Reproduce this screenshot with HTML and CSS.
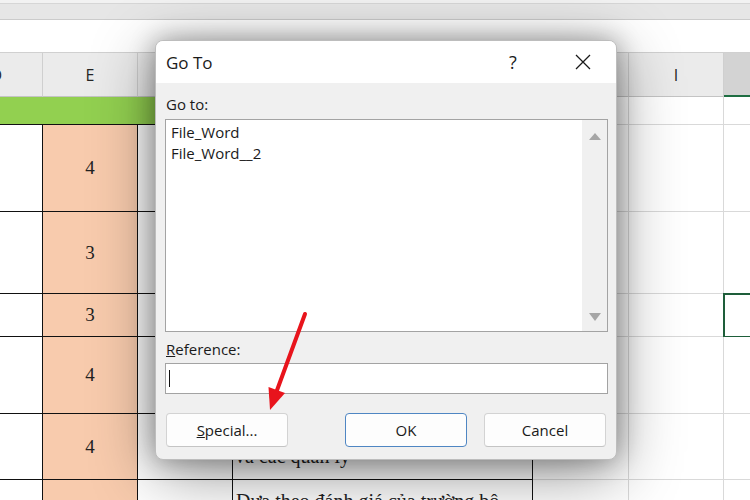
FILE: index.html
```html
<!DOCTYPE html>
<html>
<head>
<meta charset="utf-8">
<link rel="stylesheet" href="styles.css">
</head>
<body>
<div class="app">
  <div class="strip1"></div>
  <div class="strip2"></div>
  <div class="fbar"></div>
  <div class="sheet">
    <div class="hd hd-d">D</div>
    <div class="hd">E</div>
    <div class="hd">F</div>
    <div class="hd">G</div>
    <div class="hd">H</div>
    <div class="hd">I</div>
    <div class="hd hd-sel">J</div>

    <div class="green"></div>
    <div class="gc"></div><div class="gc"></div><div class="gc"></div>

    <div class="c"></div><div class="c e">4</div><div class="c"></div><div class="c"></div><div class="gc"></div><div class="gc"></div><div class="gc"></div>
    <div class="c"></div><div class="c e">3</div><div class="c"></div><div class="c"></div><div class="gc"></div><div class="gc"></div><div class="gc"></div>
    <div class="c"></div><div class="c e">3</div><div class="c"></div><div class="c"></div><div class="gc"></div><div class="gc"></div><div class="gc sel"></div>
    <div class="c"></div><div class="c e">4</div><div class="c"></div><div class="c"></div><div class="gc"></div><div class="gc"></div><div class="gc"></div>
    <div class="c"></div><div class="c e">4</div><div class="c"></div><div class="c txt bottom">Các ý kiến đóng góp của giáo viên<br>và các quản lý</div><div class="gc"></div><div class="gc"></div><div class="gc"></div>
    <div class="c"></div><div class="c e"></div><div class="c"></div><div class="c txt">Dựa theo đánh giá của trường bộ</div><div class="gc"></div><div class="gc"></div><div class="gc"></div>
  </div>

  <div class="dialog">
    <div class="titlebar">
      <div class="title">Go To</div>
      <div class="help">?</div>
      <div class="close">
        <svg width="16" height="16" viewBox="0 0 16 16"><path d="M1 1 L15 15 M15 1 L1 15" stroke="#1a1a1a" stroke-width="1.3" fill="none"/></svg>
      </div>
    </div>
    <div class="dbody">
      <div class="label lbl-goto">Go to:</div>
      <div class="listbox">
        <div class="items">
          <div class="item">File_Word</div>
          <div class="item">File_Word__2</div>
        </div>
        <div class="vscroll">
          <span class="tri-up"></span>
          <span class="tri-down"></span>
        </div>
      </div>
      <div class="label lbl-ref"><u>R</u>eference:</div>
      <div class="input"><span class="caret"></span></div>
      <div class="btnrow">
        <div class="btn btn-special"><u>S</u>pecial...</div>
        <div class="btn btn-ok">OK</div>
        <div class="btn">Cancel</div>
      </div>
    </div>
  </div>

  <svg class="arrow" width="750" height="500" viewBox="0 0 750 500">
    <path d="M305 314 L276 393" stroke="#e8141c" stroke-width="4" stroke-linecap="round" fill="none"/>
    <polygon points="270,410 268.5,387 285,393" fill="#e8141c"/>
  </svg>
</div>
</body>
</html>
```

FILE: styles.css
```css
html, body {
  margin: 0;
  padding: 0;
  background: #ffffff;
}

.app {
  position: relative;
  width: 750px;
  height: 500px;
  overflow: hidden;
  font-family: "Open Sans", "Noto Sans", sans-serif;
}

.strip1 {
  height: 3px;
  background: #f2f2f2;
  border-bottom: 1px solid #d6d6d6;
}

.strip2 {
  height: 15px;
  background: #e6e6e6;
  border-bottom: 1px solid #cbcbcb;
}

.fbar {
  height: 32px;
  background: #ffffff;
  border-bottom: 1px solid #d0d0d0;
}

.sheet {
  width: 819px;
  display: grid;
  grid-template-columns: 43px 95px 95px 300px 96px 95px 95px;
  grid-template-rows: 44px 28px 87px 82px 43px 77px 66px 40px;
}

.hd {
  box-sizing: border-box;
  background: #ebebeb;
  border-right: 1px solid #cfcfcf;
  border-bottom: 1px solid #c4c4c4;
  display: flex;
  align-items: center;
  justify-content: center;
  font-size: 16px;
  color: #262626;
}

.hd-d {
  justify-content: flex-end;
  padding-right: 40px;
  overflow: hidden;
}

.hd-sel {
  background: #d3d3d3;
  border-bottom: 2px solid #1e6e42;
}

.green {
  grid-column: 1 / 5;
  background: #92d050;
  border-bottom: 1px solid #111;
}

.c {
  box-sizing: border-box;
  border-right: 1px solid #111;
  border-bottom: 1px solid #111;
  background: #ffffff;
  font-family: "Liberation Serif", "Times New Roman", serif;
  font-size: 19px;
  color: #222;
}

.e {
  background: #f8cbad;
  display: flex;
  align-items: center;
  justify-content: center;
}

.txt {
  font-size: 20px;
  line-height: 23px;
  padding: 10px 4px 0 3px;
  white-space: nowrap;
  overflow: hidden;
}

.bottom {
  display: flex;
  flex-direction: column;
  justify-content: flex-end;
  padding: 0 4px 11px 2px;
}

.gc {
  box-sizing: border-box;
  border-right: 1px solid #d9d9d9;
  border-bottom: 1px solid #d9d9d9;
  background: #ffffff;
}

.sel {
  outline: 2px solid #1e5e3a;
  outline-offset: -1px;
}

/* Dialog */
.dialog {
  position: absolute;
  left: 155px;
  top: 40px;
  width: 462px;
  height: 420px;
  box-sizing: border-box;
  border: 1px solid #bdbdbd;
  border-radius: 8px;
  background: #f0f0f0;
  overflow: hidden;
  box-shadow: 0 0 26px rgba(0, 0, 0, 0.32), 0 14px 64px rgba(0, 0, 0, 0.42);
  color: #1a1a1a;
}

.titlebar {
  height: 42px;
  background: #ffffff;
  display: flex;
  align-items: center;
  padding: 0 10px;
}

.title {
  flex: 1;
  font-size: 17px;
}

.help {
  width: 46px;
  margin-right: 24px;
  text-align: center;
  font-size: 18px;
}

.close {
  width: 46px;
  display: flex;
  justify-content: center;
}

.dbody {
  padding: 0 8px 0 9px;
}

.label {
  font-size: 15px;
  line-height: 20px;
  padding-left: 1px;
}

.lbl-goto {
  margin-top: 11px;
}

.listbox {
  margin-top: 5px;
  height: 213px;
  box-sizing: border-box;
  border: 1px solid #a3a3a3;
  background: #ffffff;
  display: flex;
}

.items {
  flex: 1;
  padding: 2px 0 0 5px;
  font-size: 15px;
  line-height: 21px;
}

.vscroll {
  width: 25px;
  background: #f0f0f0;
  display: flex;
  flex-direction: column;
  justify-content: space-between;
  align-items: center;
  padding: 13px 0 10px;
}

.tri-up {
  width: 0;
  height: 0;
  border-left: 6px solid transparent;
  border-right: 6px solid transparent;
  border-bottom: 7px solid #a6a6a6;
}

.tri-down {
  width: 0;
  height: 0;
  border-left: 6px solid transparent;
  border-right: 6px solid transparent;
  border-top: 8px solid #a6a6a6;
}

.lbl-ref {
  margin-top: 7px;
}

.input {
  margin-top: 4px;
  height: 31px;
  box-sizing: border-box;
  border: 1px solid #a3a3a3;
  background: #ffffff;
  padding: 6px 0 0 3px;
}

.caret {
  display: block;
  width: 1px;
  height: 17px;
  background: #111;
}

.btnrow {
  margin-top: 19px;
  display: flex;
  padding: 0 2px 0 1px;
}

.btn {
  width: 122px;
  height: 34px;
  box-sizing: border-box;
  background: #fdfdfd;
  border: 1px solid #d3d3d3;
  border-bottom-color: #c4c4c4;
  border-radius: 4px;
  display: flex;
  align-items: center;
  justify-content: center;
  font-size: 15px;
}

.btn-special {
  margin-right: auto;
}

.btn-ok {
  margin-right: 17px;
  border-color: #4f86c3;
}

.arrow {
  position: absolute;
  left: 0;
  top: 0;
  pointer-events: none;
}
```
